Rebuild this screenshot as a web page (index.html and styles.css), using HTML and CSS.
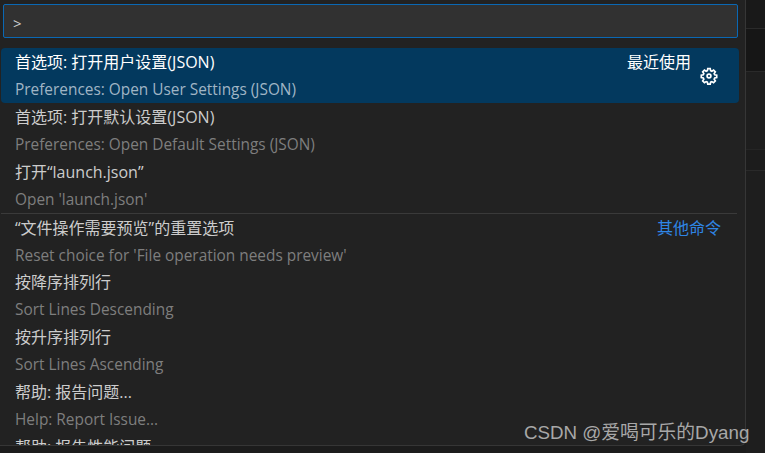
FILE: index.html
```html
<!DOCTYPE html>
<html lang="zh-CN">
<head>
  <meta charset="UTF-8">
  <title>Command Palette</title>
  <link rel="stylesheet" href="styles.css">
</head>
<body>

<div class="palette">
  <div class="input-wrap">
    <div class="input">&gt;</div>
  </div>

  <div class="list">
    <div class="item active">
      <div class="line">
        <span>首选项: 打开用户设置(JSON)</span>
        <span class="tag">最近使用</span>
      </div>
      <div class="line sub">Preferences: Open User Settings (JSON)</div>
      <svg class="gear" viewBox="0 0 16 16" width="18" height="18" fill="none" stroke="#fff" stroke-width="1.5">
        <path d="M6.9 1.5h2.2l.35 1.8 1.1.46 1.52-1.03 1.56 1.56-1.03 1.52.46 1.1 1.8.35v2.2l-1.8.35-.46 1.1 1.03 1.52-1.56 1.56-1.52-1.03-1.1.46-.35 1.8H6.9l-.35-1.8-1.1-.46-1.52 1.03-1.56-1.56 1.03-1.52-.46-1.1-1.8-.35v-2.2l1.8-.35.46-1.1-1.03-1.52 1.56-1.56 1.52 1.03 1.1-.46z"/>
        <circle cx="8" cy="8" r="1.7"/>
      </svg>
    </div>

    <div class="item">
      <div class="line">首选项: 打开默认设置(JSON)</div>
      <div class="line sub">Preferences: Open Default Settings (JSON)</div>
    </div>

    <div class="item">
      <div class="line">打开“launch.json”</div>
      <div class="line sub">Open 'launch.json'</div>
    </div>

    <div class="item separated">
      <div class="line">
        <span>“文件操作需要预览”的重置选项</span>
        <span class="link">其他命令</span>
      </div>
      <div class="line sub">Reset choice for 'File operation needs preview'</div>
    </div>

    <div class="item">
      <div class="line">按降序排列行</div>
      <div class="line sub">Sort Lines Descending</div>
    </div>

    <div class="item">
      <div class="line">按升序排列行</div>
      <div class="line sub">Sort Lines Ascending</div>
    </div>

    <div class="item">
      <div class="line">帮助: 报告问题...</div>
      <div class="line sub">Help: Report Issue...</div>
    </div>

    <div class="item">
      <div class="line">帮助: 报告性能问题</div>
      <div class="line sub">Help: Report Performance Issue</div>
    </div>
  </div>
</div>

<div class="side">
  <div class="side-row tabs"></div>
  <div class="side-row crumbs"></div>
  <div class="side-row editor"></div>
  <div class="side-row thin"></div>
  <div class="side-row rest"></div>
</div>

<div class="watermark">CSDN @爱喝可乐的Dyang</div>

</body>
</html>
```

FILE: styles.css
```css
body {
  margin: 0;
  width: 765px;
  height: 453px;
  overflow: hidden;
  display: flex;
  align-items: flex-start;
  background-color: #1c1c1c;
  font-family: "Open Sans", "Noto Sans CJK SC", sans-serif;
  font-size: 16px;
  color: #cccccc;
}

.palette {
  width: 746px;
  height: 446px;
  box-sizing: border-box;
  flex-shrink: 0;
  overflow: hidden;
  background-color: #222222;
  border-right: 1px solid #363636;
  border-bottom: 1px solid #363636;
  border-bottom-right-radius: 6px;
}

.input-wrap {
  padding: 4px 7px 10px 3px;
}

.input {
  height: 34px;
  box-sizing: border-box;
  padding-left: 9px;
  line-height: 36px;
  font-size: 15px;
  background-color: #313131;
  border: 1px solid #0a68b4;
  border-radius: 2px;
}

.list {
  padding: 0 6px 0 1px;
}

.item {
  position: relative;
  height: 55px;
  box-sizing: border-box;
  padding: 0 18px 0 14px;
  border-radius: 4px;
}

.item.active {
  background-color: #03395e;
  color: #ffffff;
}

.item.separated {
  margin-right: 2px;
  padding-right: 16px;
  border-top: 1px solid #3a3a3a;
  border-radius: 0;
}

.line {
  display: flex;
  justify-content: space-between;
  height: 27.5px;
  line-height: 29px;
  white-space: nowrap;
}

.sub {
  font-size: 15.4px;
  line-height: 27.5px;
  color: #7e7e7e;
}

.active .sub {
  color: #a0b5c5;
}

.tag {
  margin-right: 30px;
}

.link {
  color: #2f86e6;
}

.gear {
  position: absolute;
  right: 21px;
  top: 19px;
}

.side {
  flex: 1;
}

.side-row {
  box-sizing: border-box;
  border-bottom: 1px solid #2a2a2a;
}

.tabs {
  height: 29px;
  background-color: #191919;
}

.crumbs {
  height: 43px;
  background-color: #161616;
}

.editor {
  height: 78px;
  background-color: #1e1e1e;
  border-bottom-color: #252525;
}

.thin {
  height: 21px;
  background-color: #1c1c1c;
}

.rest {
  height: 282px;
  background-color: #1e1e1e;
  border-bottom: none;
}

.watermark {
  position: absolute;
  left: 524px;
  top: 417px;
  font-size: 18.75px;
  font-family: "Liberation Sans", "Noto Sans CJK SC", sans-serif;
  color: #a8a8a8;
  white-space: nowrap;
}
```
